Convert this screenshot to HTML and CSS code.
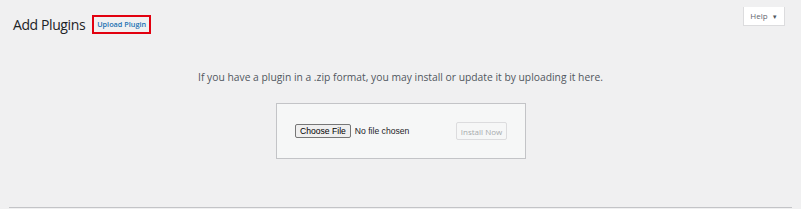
FILE: index.html
```html
<!DOCTYPE html>
<html lang="en">
<head>
    <meta charset="UTF-8">
    <title>Add Plugins</title>
    <link rel="stylesheet" href="styles.css">
</head>
<body>
    <div class="wrap">
        <div class="help-bar">
            <button class="help-btn">Help <span class="arrow">&#9660;</span></button>
        </div>

        <div class="heading">
            <h1>Add Plugins</h1>
            <span class="upload-mark"><a href="#" class="upload-btn">Upload Plugin</a></span>
        </div>

        <p class="install-help">If you have a plugin in a .zip format, you may install or update it by uploading it here.</p>

        <form class="upload-form">
            <span class="file-btn">Choose File</span>
            <span class="file-name">No file chosen</span>
            <button class="install-btn" disabled>Install Now</button>
        </form>
    </div>
</body>
</html>
```

FILE: styles.css
```css
* {
    box-sizing: border-box;
}

html, body {
    margin: 0;
    height: 100%;
}

body {
    background: #f0f0f1;
    font-family: "Open Sans", "Noto Sans", Arial, sans-serif;
    color: #3c434a;
    padding: 0 9px 0 9px;
}

.wrap {
    position: relative;
    height: 208px;
    border-bottom: 1px solid #c3c4c7;
}

.help-bar {
    position: absolute;
    top: 2px;
    right: 7px;
}

.help-btn {
    background: #fff;
    border: 1px solid #dcdcde;
    border-top: none;
    color: #646970;
    font-family: inherit;
    font-size: 8px;
    height: 19px;
    width: 42px;
    padding: 0;
}

.help-btn .arrow {
    font-size: 6px;
    margin-left: 2px;
    color: #50575e;
}

.heading {
    display: flex;
    align-items: center;
    padding: 15px 0 0 4px;
    gap: 7px;
}

h1 {
    margin: 0;
    font-size: 14px;
    font-weight: 400;
    color: #1d2327;
    letter-spacing: -0.4px;
}

.upload-mark {
    border: 2px solid #e2000f;
    padding: 2px 3px;
    line-height: 1;
}

.upload-btn {
    display: block;
    font-size: 7.3px;
    font-weight: 600;
    color: #2271b1;
    text-decoration: none;
    padding: 2px 0;
}

.install-help {
    text-align: center;
    font-size: 10.3px;
    color: #50575e;
    margin: 36px 0 0 0;
}

.upload-form {
    width: 250px;
    height: 56px;
    margin: 19px 0 0 267px;
    background: #f6f7f7;
    border: 1px solid #c3c4c7;
    display: flex;
    align-items: center;
    padding: 0 18px;
}

.file-btn {
    font-family: "Liberation Sans", Arial, sans-serif;
    font-size: 8.6px;
    color: #000;
    background: #efefef;
    border: 1px solid #767676;
    border-radius: 2px;
    padding: 0 4px;
    height: 14px;
    line-height: 12px;
}

.file-name {
    font-family: "Liberation Sans", Arial, sans-serif;
    font-size: 8.6px;
    color: #1d2327;
    margin-left: 4px;
}

.install-btn {
    margin-left: auto;
    background: #f6f7f7;
    border: 1px solid #dcdcde;
    border-radius: 2px;
    color: #a7aaad;
    font-family: inherit;
    font-size: 8px;
    height: 18px;
    width: 51px;
    padding: 0;
}
```
